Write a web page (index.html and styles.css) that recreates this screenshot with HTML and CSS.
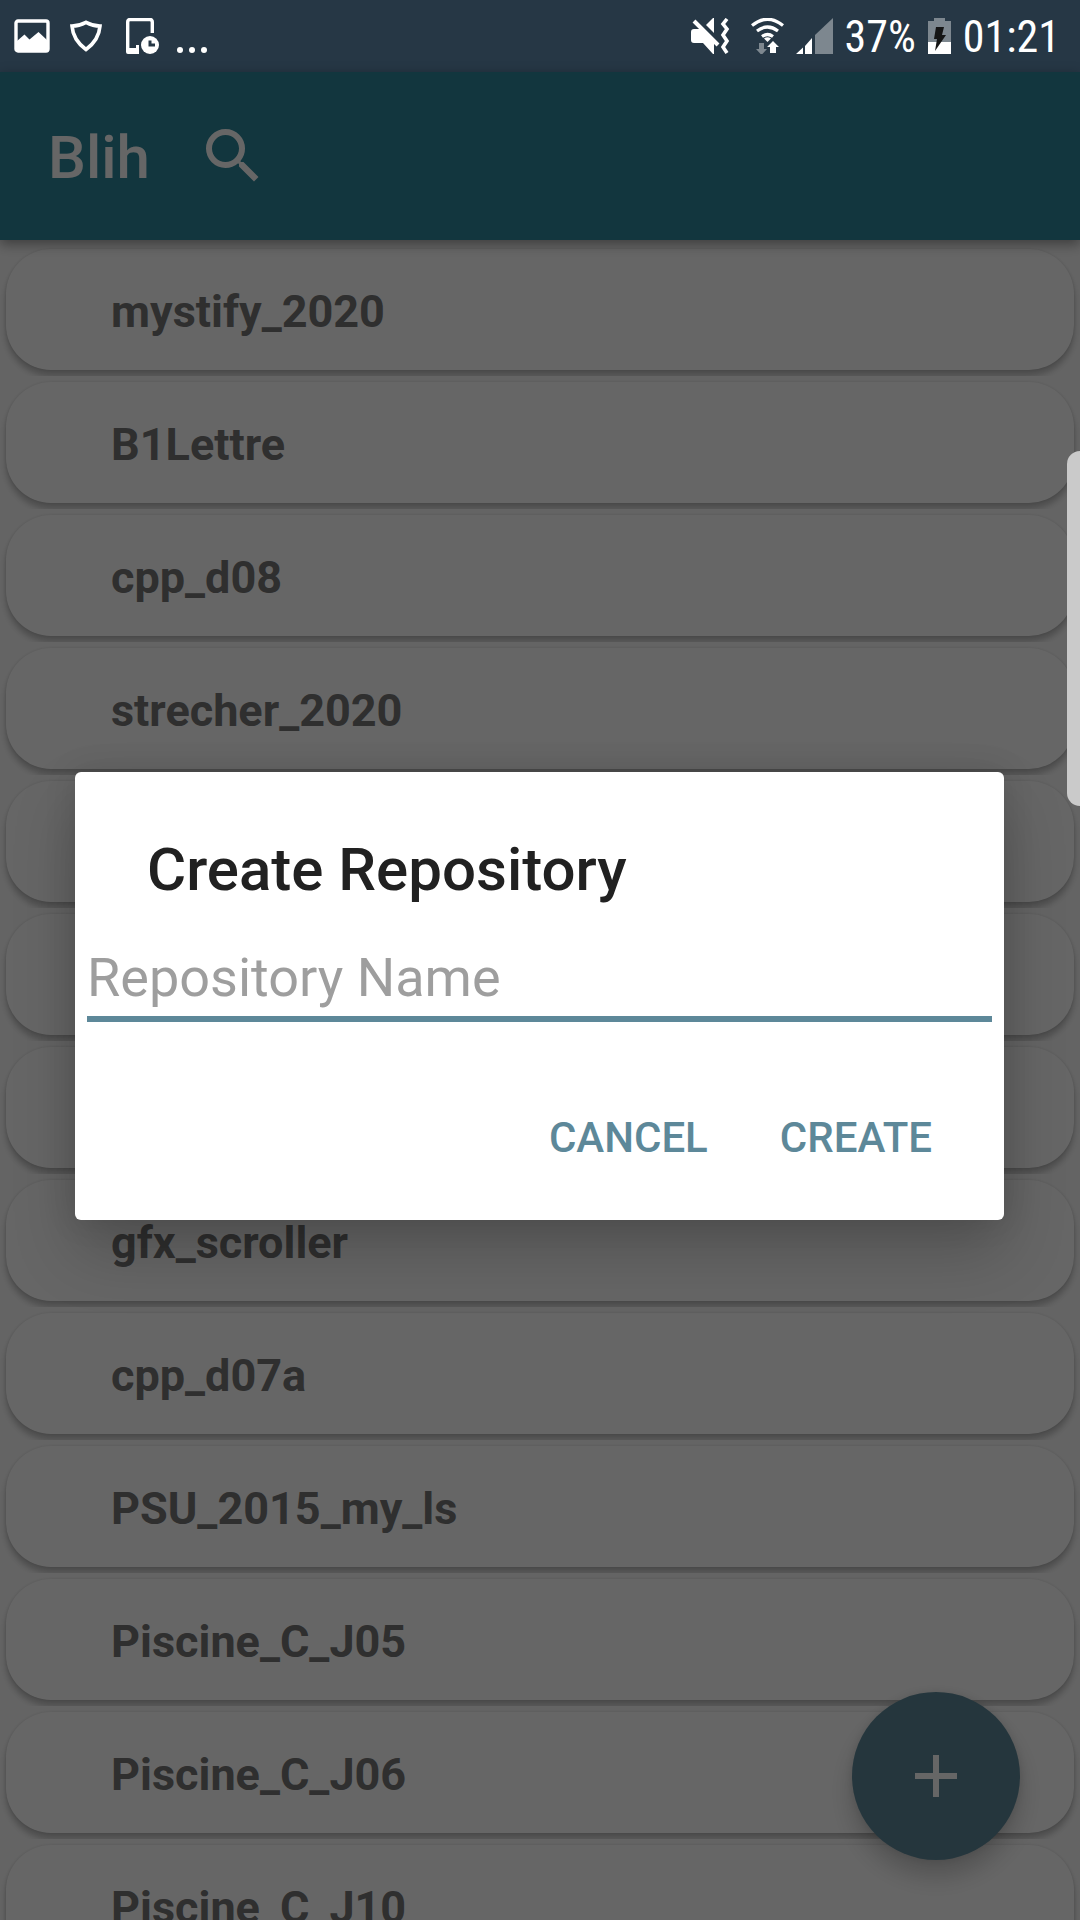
FILE: index.html
```html
<!DOCTYPE html>
<html lang="en">
<head>
<meta charset="utf-8">
<meta name="viewport" content="width=device-width, initial-scale=1">
<title>Blih</title>
<link rel="stylesheet" href="styles.css">
</head>
<body>
<div class="app">
  <div class="status-bar">
    <div class="status-group status-left">
      <svg width="36" height="36" viewBox="0 0 36 36"><rect x="2" y="3" width="32" height="30" rx="2" fill="none" stroke="#fff" stroke-width="3.4"/><path d="M3 23l7.5-6.5 5 5 9-7.500L33 22v11H3z" fill="#fff"/></svg>
      <svg width="36" height="36" viewBox="0 0 36 36"><path d="M18 4.300Q25 8 32 8Q31 22 18 31.500Q5 22 4 8Q11 8 18 4.300z" fill="none" stroke="#fff" stroke-width="3.600"/></svg>
      <svg width="37" height="36" viewBox="0 0 37 36"><path d="M30.300 15V4q0-2.500-2.500-2.500H8q-2.300 0-2.300 2.500V30q0 4 2.300 4h9" fill="none" stroke="#fff" stroke-width="3.400"/><path d="M4 30h13v6H6q-2 0-2-2zM14 27h3v3h-3z" fill="#fff"/><circle cx="28" cy="27" r="9" fill="#fff"/><path d="M28 22.500V27h5" fill="none" stroke="#263745" stroke-width="3"/></svg>
      <svg width="30" height="36" viewBox="0 0 30 36" fill="#fff"><circle cx="3" cy="32" r="3"/><circle cx="15" cy="32" r="3"/><circle cx="27" cy="32" r="3"/></svg>
    </div>
    <div class="status-group status-right">
      <svg width="48" height="36" viewBox="0 0 48 36"><path d="M15 7l7-7h1v15z" fill="#fff"/><path d="M0 14q0-3 3-3h7l13 13v12h-1L12 25H3q-3 0-3-3z" fill="#fff"/><path d="M5 0l25 25" stroke="#263745" stroke-width="3"/><path d="M3 3l24 24" stroke="#fff" stroke-width="4"/><path d="M36 1l-4 5 4 5-4 6 4 6-4 6 4 6" fill="none" stroke="#fff" stroke-width="3.600"/></svg>
      <svg width="33" height="36" viewBox="0 0 33 36"><path d="M1 7.500Q16.500-5 32 7.500M6 13q10.500-8 21 0M11 18.500q5.500-4 11 0" fill="none" stroke="#fff" stroke-width="3.200"/><path d="M13 20.500q3.500-2.500 7 0L16.500 24z" fill="#fff"/><path d="M22 23l6 6h-3v6h-6v-6h-3z" fill="#fff"/><path d="M8 25h5v6h3l-5.500 6L5 31h3z" fill="#7d878f"/></svg>
      <svg width="37" height="36" viewBox="0 0 37 36"><path d="M0 36l7-6.500V36zM9 28l7-8v16H9z" fill="#fff"/><path d="M19 17L37 0v36H19z" fill="#7d878f"/></svg>
      <span class="status-text">37%</span>
      <svg width="23" height="36" viewBox="0 0 23 36"><path d="M6 0h11v3h6v22H0V3h6z" fill="#7d878f"/><path d="M0 24h23v12H0z" fill="#fff"/><path d="M8 9h8l-2 8h4L7 33l2-12H6z" fill="#151515"/></svg>
      <span class="status-text">01:21</span>
    </div>
  </div>

  <header class="toolbar">
    <h1 class="toolbar-title">Blih</h1>
    <button class="icon-button" type="button" aria-label="Search">
      <svg width="72" height="72" viewBox="0 0 24 24"><path fill="#fff" d="M15.500 14h-.79l-.28-.27A6.471 6.471 0 0 0 16 9.500 6.500 6.500 0 1 0 9.500 16c1.610 0 3.090-.59 4.230-1.570l.27.28v.79l5 4.990L20.490 19l-4.990-5zm-6 0C7.010 14 5 11.990 5 9.500S7.010 5 9.500 5 14 7.010 14 9.500 11.990 14 9.500 14z"/></svg>
    </button>
  </header>

  <ul class="repo-list">
    <li class="repo-row"><div class="repo-card">mystify_2020</div></li>
    <li class="repo-row"><div class="repo-card">B1Lettre</div></li>
    <li class="repo-row"><div class="repo-card">cpp_d08</div></li>
    <li class="repo-row"><div class="repo-card">strecher_2020</div></li>
    <li class="repo-row"><div class="repo-card"></div></li>
    <li class="repo-row"><div class="repo-card"></div></li>
    <li class="repo-row"><div class="repo-card"></div></li>
    <li class="repo-row"><div class="repo-card">gfx_scroller</div></li>
    <li class="repo-row"><div class="repo-card">cpp_d07a</div></li>
    <li class="repo-row"><div class="repo-card">PSU_2015_my_ls</div></li>
    <li class="repo-row"><div class="repo-card">Piscine_C_J05</div></li>
    <li class="repo-row"><div class="repo-card">Piscine_C_J06</div></li>
    <li class="repo-row"><div class="repo-card">Piscine_C_J10</div></li>
  </ul>

  <button class="fab" type="button" aria-label="Add repository">
    <svg width="72" height="72" viewBox="0 0 24 24"><path fill="#fff" d="M19 13h-6v6h-2v-6H5v-2h6V5h2v6h6v2z"/></svg>
  </button>

  <div class="scrim">
    <form class="dialog" role="dialog" aria-labelledby="dialog-title">
      <h2 class="dialog-title" id="dialog-title">Create Repository</h2>
      <input class="dialog-input" type="text" placeholder="Repository Name" aria-label="Repository Name">
      <div class="dialog-actions">
        <button class="dialog-button" type="button">CANCEL</button>
        <button class="dialog-button" type="submit">CREATE</button>
      </div>
    </form>
  </div>

  <div class="edge-handle"></div>
</div>
</body>
</html>
```

FILE: styles.css
```css
* {
  box-sizing: border-box;
}

body {
  margin: 0;
  font-family: Roboto, "Noto Sans", sans-serif;
}

button {
  border: 0;
  padding: 0;
  background: none;
  font: inherit;
  cursor: pointer;
}

svg {
  display: block;
  flex: none;
}

.app {
  position: relative;
  display: flex;
  flex-direction: column;
  height: 100vh;
  overflow: hidden;
  background: #fafafa;
}

/* Status bar */
.status-bar {
  flex: none;
  display: flex;
  justify-content: space-between;
  height: 72px;
  padding: 0 20px 0 14px;
  background: #263745;
  color: #fff;
}

.status-group {
  display: flex;
  align-items: center;
}

.status-left {
  gap: 18px;
}

.status-right {
  gap: 12px;
}

.status-text {
  padding-top: 2px;
  font-family: "Roboto Condensed", "Liberation Sans Narrow", Roboto, sans-serif;
  font-size: 44px;
  line-height: 70px;
}

/* Toolbar */
.toolbar {
  position: relative;
  z-index: 1;
  flex: none;
  display: flex;
  align-items: center;
  gap: 47px;
  height: 168px;
  padding: 0 48px;
  background: #2d879b;
  box-shadow: 0 4px 12px rgba(0, 0, 0, 0.4);
  color: #fff;
}

.toolbar-title {
  margin: 4px 0 0;
  font-size: 60px;
  font-weight: 500;
  line-height: 72px;
}

/* Repository list */
.repo-list {
  flex: none;
  margin: 0;
  padding: 3px 0 0;
  list-style: none;
}

.repo-row {
  padding: 6px;
  overflow: hidden;
}

.repo-card {
  display: flex;
  align-items: center;
  height: 121px;
  padding: 3px 105px 0;
  border-radius: 45px;
  background: #fff;
  box-shadow: 0 6px 6px rgba(0, 0, 0, 0.24), 0 0 3px rgba(0, 0, 0, 0.12);
  color: #757575;
  font-size: 45px;
  font-weight: 700;
}

.fab {
  position: absolute;
  right: 60px;
  bottom: 60px;
  display: flex;
  align-items: center;
  justify-content: center;
  width: 168px;
  height: 168px;
  border-radius: 50%;
  background: #5d8899;
  box-shadow: 0 16px 24px rgba(0, 0, 0, 0.2), 0 0 8px rgba(0, 0, 0, 0.1);
}

/* Dialog */
.scrim {
  position: absolute;
  inset: 72px 0 0;
  z-index: 2;
  display: flex;
  align-items: center;
  justify-content: center;
  padding: 0 76px 0 75px;
  background: rgba(0, 0, 0, 0.6);
}

.dialog {
  flex: 1;
  padding: 60px 12px 11px;
  border-radius: 6px;
  background: #fff;
  box-shadow: 0 32px 64px rgba(0, 0, 0, 0.2), 0 0 32px rgba(0, 0, 0, 0.12);
}

.dialog-title {
  margin: 0;
  padding: 0 60px;
  color: #212121;
  font-size: 60px;
  font-weight: 500;
  line-height: 76px;
}

.dialog-input {
  display: block;
  width: 100%;
  height: 90px;
  margin-top: 24px;
  padding: 6px 0 0;
  border: 0;
  border-bottom: 6px solid #5d8899;
  outline: none;
  background: none;
  color: #212121;
  font-family: inherit;
  font-size: 54px;
}

.dialog-input::placeholder {
  color: #9e9e9e;
  opacity: 1;
}

.dialog-actions {
  display: flex;
  justify-content: flex-end;
  gap: 24px;
  padding: 43px 36px 0;
}

.dialog-button {
  height: 144px;
  padding: 0 24px;
  color: #5d8899;
  font-size: 42px;
  font-weight: 500;
}

/* Edge panel handle */
.edge-handle {
  position: absolute;
  top: 451px;
  right: 0;
  z-index: 3;
  width: 13px;
  height: 355px;
  border-radius: 14px 0 0 14px;
  background: #cacaca;
}
```
